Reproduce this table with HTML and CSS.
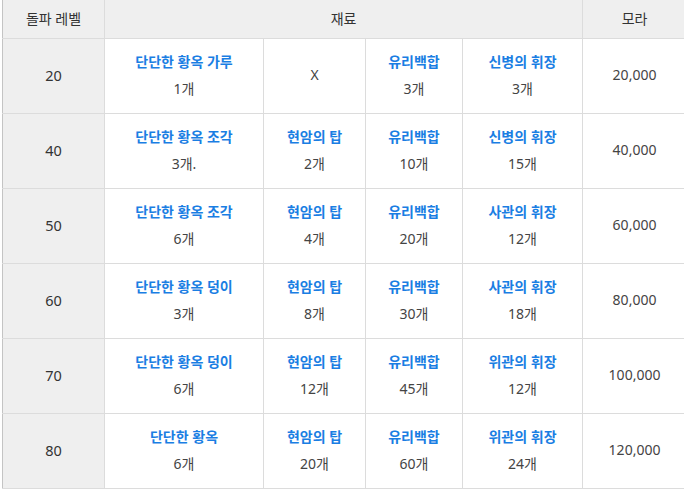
FILE: index.html
```html
<!DOCTYPE html>
<html lang="ko">
<head>
<meta charset="utf-8">
<link rel="stylesheet" href="styles.css">
</head>
<body>
<div class="wrap">
<table class="mat">
  <colgroup>
    <col class="c1"><col class="c2"><col class="c3"><col class="c4"><col class="c5"><col class="c6">
  </colgroup>
  <thead>
    <tr><th>돌파 레벨</th><th colspan="4">재료</th><th>모라</th></tr>
  </thead>
  <tbody>
    <tr><th class="lv">20</th>
      <td><a>단단한 황옥 가루</a><span>1개</span></td>
      <td class="x">X</td>
      <td><a>유리백합</a><span>3개</span></td>
      <td><a>신병의 휘장</a><span>3개</span></td>
      <td class="mora">20,000</td></tr>
    <tr><th class="lv">40</th>
      <td><a>단단한 황옥 조각</a><span>3개.</span></td>
      <td><a>현암의 탑</a><span>2개</span></td>
      <td><a>유리백합</a><span>10개</span></td>
      <td><a>신병의 휘장</a><span>15개</span></td>
      <td class="mora">40,000</td></tr>
    <tr><th class="lv">50</th>
      <td><a>단단한 황옥 조각</a><span>6개</span></td>
      <td><a>현암의 탑</a><span>4개</span></td>
      <td><a>유리백합</a><span>20개</span></td>
      <td><a>사관의 휘장</a><span>12개</span></td>
      <td class="mora">60,000</td></tr>
    <tr><th class="lv">60</th>
      <td><a>단단한 황옥 덩이</a><span>3개</span></td>
      <td><a>현암의 탑</a><span>8개</span></td>
      <td><a>유리백합</a><span>30개</span></td>
      <td><a>사관의 휘장</a><span>18개</span></td>
      <td class="mora">80,000</td></tr>
    <tr><th class="lv">70</th>
      <td><a>단단한 황옥 덩이</a><span>6개</span></td>
      <td><a>현암의 탑</a><span>12개</span></td>
      <td><a>유리백합</a><span>45개</span></td>
      <td><a>위관의 휘장</a><span>12개</span></td>
      <td class="mora">100,000</td></tr>
    <tr><th class="lv">80</th>
      <td><a>단단한 황옥</a><span>6개</span></td>
      <td><a>현암의 탑</a><span>20개</span></td>
      <td><a>유리백합</a><span>60개</span></td>
      <td><a>위관의 휘장</a><span>24개</span></td>
      <td class="mora">120,000</td></tr>
  </tbody>
</table>
</div>
</body>
</html>
```

FILE: styles.css
```css
html, body {
  margin: 0;
  padding: 0;
  background: #fff;
}
.wrap {
  padding-left: 2px;
  width: 700px;
}
.mat {
  border-collapse: collapse;
  table-layout: fixed;
  width: 684px;
  font-family: "Noto Sans", "Noto Sans CJK KR", sans-serif;
  font-size: 14px;
  color: #333;
  margin-top: -1px;
}
.c1 { width: 102px; }
.c2 { width: 159px; }
.c3 { width: 102px; }
.c4 { width: 97px; }
.c5 { width: 120px; }
.c6 { width: 104px; }
.mat th, .mat td {
  border: 1px solid #dcdcdc;
  text-align: center;
  vertical-align: middle;
  padding: 0 0 3px;
}
.mat tr > :first-child {
  border-left-color: #c4c4c4;
}
.mat thead th {
  background: #efefef;
  font-weight: 400;
  height: 35px;
  color: #333;
}
.mat tbody tr {
  height: 75px;
}
.mat th.lv {
  background: #efefef;
  font-weight: 400;
  font-size: 14.5px;
}
.mat td a {
  display: block;
  color: #1a7ee3;
  font-weight: 700;
  line-height: 27px;
}
.mat td span {
  display: block;
  line-height: 27px;
  color: #444;
}
.mat td.x, .mat td.mora {
  color: #444;
}
```
